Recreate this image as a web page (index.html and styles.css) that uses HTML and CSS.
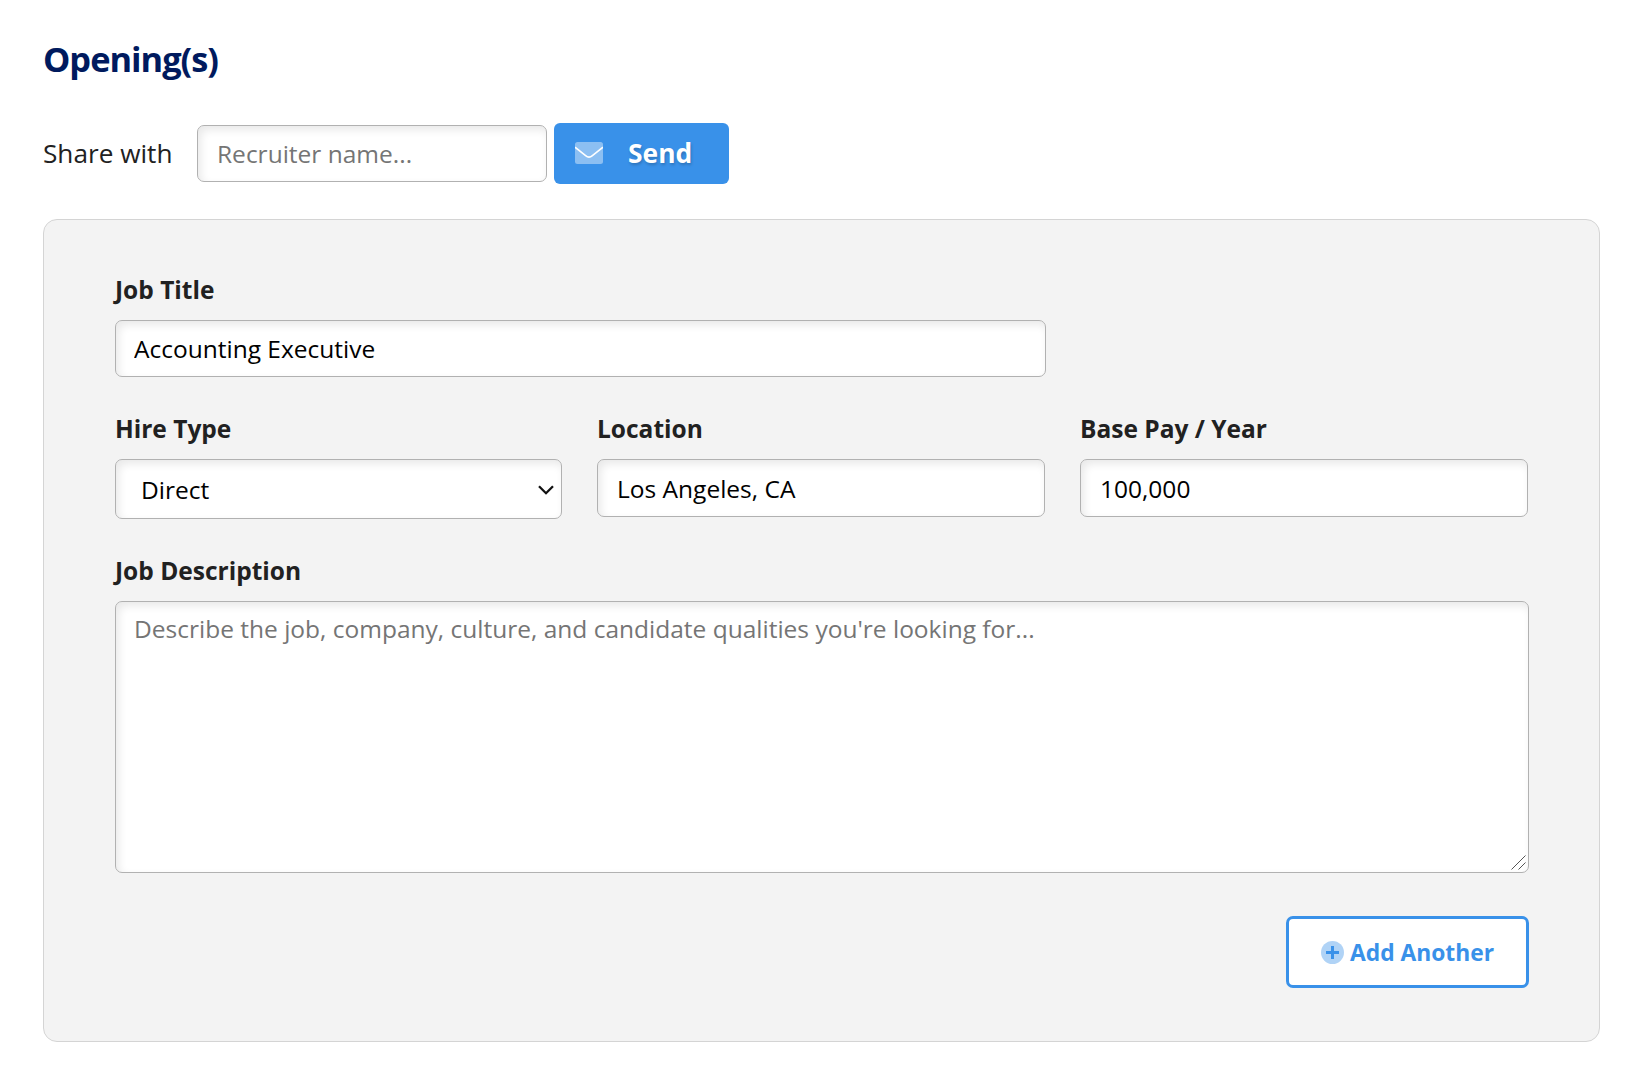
FILE: index.html
```html
<!DOCTYPE html>
<html lang="en">
<head>
<meta charset="utf-8">
<title>Opening(s)</title>
<link rel="stylesheet" href="styles.css">
</head>
<body>
<main class="page">
  <h1 class="title">Opening(s)</h1>
  <form class="share">
    <label class="share-label" for="recruiter">Share with</label>
    <input class="field share-input" id="recruiter" type="text" placeholder="Recruiter name...">
    <button class="send" type="button">
      <svg class="mail" viewBox="0 0 28 22" aria-hidden="true">
        <rect class="mail-body" width="28" height="22" rx="2.5"/>
        <path class="mail-flap" d="M0 5.2 10.6 13.6Q14 16.6 17.4 13.6L28 5.2"/>
      </svg>
      <span>Send</span>
    </button>
  </form>
  <form class="card">
    <div class="group group-title">
      <label class="label" for="job">Job Title</label>
      <input class="field" id="job" type="text" value="Accounting Executive">
    </div>
    <div class="row">
      <div class="group">
        <label class="label" for="hire">Hire Type</label>
        <div class="select-wrap">
          <select class="field select" id="hire"><option>Direct</option></select>
          <svg class="chevron" viewBox="0 0 16 10" aria-hidden="true"><path d="M1 1.2 8 8.2 15 1.2"/></svg>
        </div>
      </div>
      <div class="group">
        <label class="label" for="location">Location</label>
        <input class="field tall" id="location" type="text" value="Los Angeles, CA">
      </div>
      <div class="group">
        <label class="label" for="pay">Base Pay / Year</label>
        <input class="field tall" id="pay" type="text" value="100,000">
      </div>
    </div>
    <div class="group">
      <label class="label" for="description">Job Description</label>
      <div class="area-wrap">
        <textarea class="field area" id="description" placeholder="Describe the job, company, culture, and candidate qualities you're looking for..."></textarea>
        <svg class="grip" viewBox="0 0 15 15" aria-hidden="true"><path d="M.5 14.5 14.5.5M7.5 14.5 14.5 7.5"/></svg>
      </div>
    </div>
    <button class="add" type="button">
      <svg class="plus" viewBox="0 0 23 23" aria-hidden="true">
        <circle cx="11.5" cy="11.5" r="11.5"/>
        <path d="M11.5 5v13M5 11.5h13"/>
      </svg>
      <span>Add Another</span>
    </button>
  </form>
</main>
</body>
</html>
```
FILE: styles.css
```css
* { box-sizing: border-box; }

body {
  margin: 0;
  background: #fff;
  color: #212121;
  font-family: "Open Sans", sans-serif;
  font-size: 25px;
}

.page { padding: 35px 48px 48px 43px; }

.title {
  margin: 0;
  color: #001a5e;
  font-size: 34.4px;
  font-weight: 700;
  line-height: 48px;
  letter-spacing: -1px;
}

.share {
  display: flex;
  align-items: center;
  margin-top: 40px;
}

.share-label {
  width: 154px;
  padding-bottom: 2px;
  font-size: 26.2px;
  line-height: 36px;
}

.field {
  display: block;
  width: 100%;
  height: 57px;
  margin: 0;
  padding: 0 18px;
  border: 1px solid #b1b1b1;
  border-radius: 7px;
  background: #fff;
  box-shadow: inset 3px 4px 9px rgba(0, 0, 0, .09);
  color: #000;
  font: 400 24.5px "Open Sans", sans-serif;
  outline: 0;
}

.field::placeholder { color: #757575; opacity: 1; }

.share-input { width: 350px; padding-left: 19px; }

.send {
  display: flex;
  align-items: center;
  gap: 25px;
  width: 175px;
  height: 61px;
  margin-left: 7px;
  padding: 0 0 2px 21px;
  border: 0;
  border-radius: 6px;
  background: #3991e9;
  color: #fff;
  font: 700 26.4px "Open Sans", sans-serif;
  text-shadow: 1px 2px 3px rgba(0, 0, 0, .2);
}

.mail { width: 28px; height: 22px; }
.mail-body { fill: #fff; opacity: .42; }
.mail-flap { fill: none; stroke: #fff; stroke-width: 1.6; }

.card {
  display: flex;
  flex-direction: column;
  height: 823px;
  margin-top: 35px;
  padding: 53px 70px 53px 71px;
  border: 1px solid #d4d4d4;
  border-radius: 14px;
  background: #f3f3f3;
}

.label {
  display: block;
  margin-bottom: 13px;
  font-size: 24.5px;
  font-weight: 700;
  line-height: 34px;
}

.group-title { width: 931px; }

.row {
  display: grid;
  grid-template-columns: 447px 448px 448px;
  gap: 35px;
  margin: 35px 0;
}

.select-wrap, .area-wrap { position: relative; }
.tall { height: 58px; padding: 0 19px; }
.select { height: 60px; padding: 0 25px; appearance: none; }

.chevron {
  position: absolute;
  right: 8px;
  top: 26px;
  width: 16px;
  height: 10px;
  fill: none;
  stroke: #111;
  stroke-width: 2.3;
}

.area { height: 272px; padding: 10px 18px; line-height: 34px; resize: none; }

.grip {
  position: absolute;
  right: 3px;
  bottom: 3px;
  width: 15px;
  height: 15px;
  fill: none;
  stroke: #555;
}

.add {
  display: flex;
  align-items: center;
  align-self: flex-end;
  gap: 6px;
  width: 243px;
  height: 72px;
  margin-top: 43px;
  padding: 0 0 0 32px;
  border: 3px solid #3991e9;
  border-radius: 7px;
  background: #fff;
  color: #3991e9;
  font: 700 22.8px "Open Sans", sans-serif;
  white-space: nowrap;
}

.plus { width: 23px; height: 23px; }
.plus circle { fill: #b0d3f6; }
.plus path { fill: none; stroke: #3991e9; stroke-width: 3; }
```
